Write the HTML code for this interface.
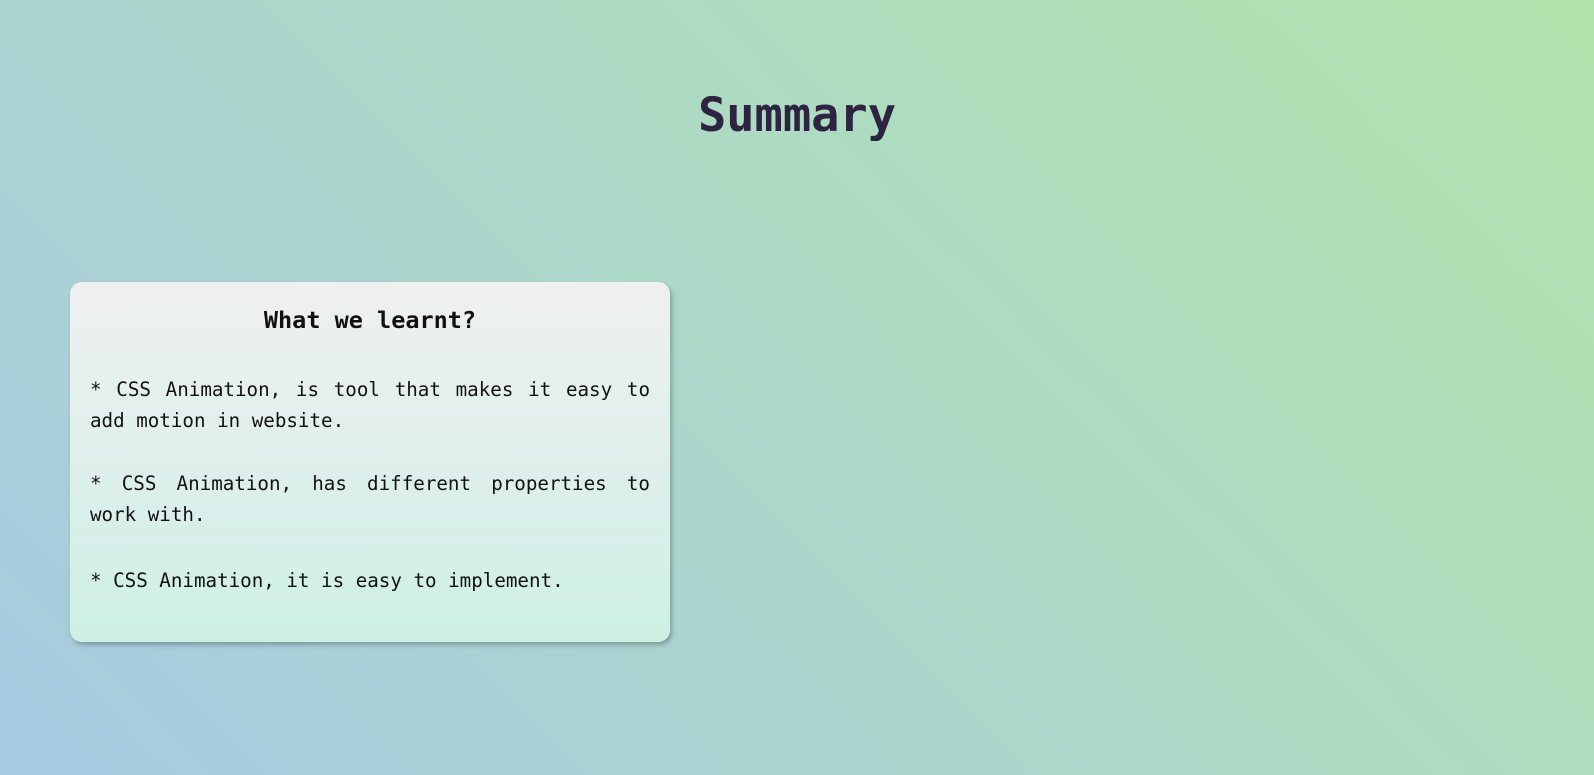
<!DOCTYPE html>
<html><head><meta charset="utf-8"><style>
html,body{margin:0;padding:0;}
body{width:1594px;height:775px;overflow:hidden;position:relative;
background:linear-gradient(45deg,#a8c9e2 0%,#acd7ca 45%,#b3e4ac 100%);
font-family:"DejaVu Sans Mono","Liberation Mono",monospace;}
h1{position:absolute;left:0;width:1594px;top:86px;margin:0;text-align:center;font-size:47px;line-height:60px;color:#2c2440;font-weight:bold;}
.card{position:absolute;left:70px;top:282px;width:600px;height:360px;border-radius:12px;
background:linear-gradient(180deg,#eff0f0 0%,#ddefea 55%,#cdf0e4 100%);
box-shadow:2px 3px 5px rgba(0,0,0,0.25);}
.card h2{position:absolute;top:23px;left:0;width:600px;margin:0;text-align:center;font-size:23.5px;line-height:30px;color:#111;}
.card p{position:absolute;left:20px;width:560px;margin:0;font-size:19.2px;line-height:31px;color:#111;text-align:justify;}
</style></head><body>
<h1>Summary</h1>
<div class="card">
<h2>What we learnt?</h2>
<p style="top:92px">* CSS Animation, is tool that makes it easy to add motion in website.</p>
<p style="top:186px">* CSS Animation, has different properties to work with.</p>
<p style="top:283px">* CSS Animation, it is easy to implement.</p>
</div>
</body></html>
